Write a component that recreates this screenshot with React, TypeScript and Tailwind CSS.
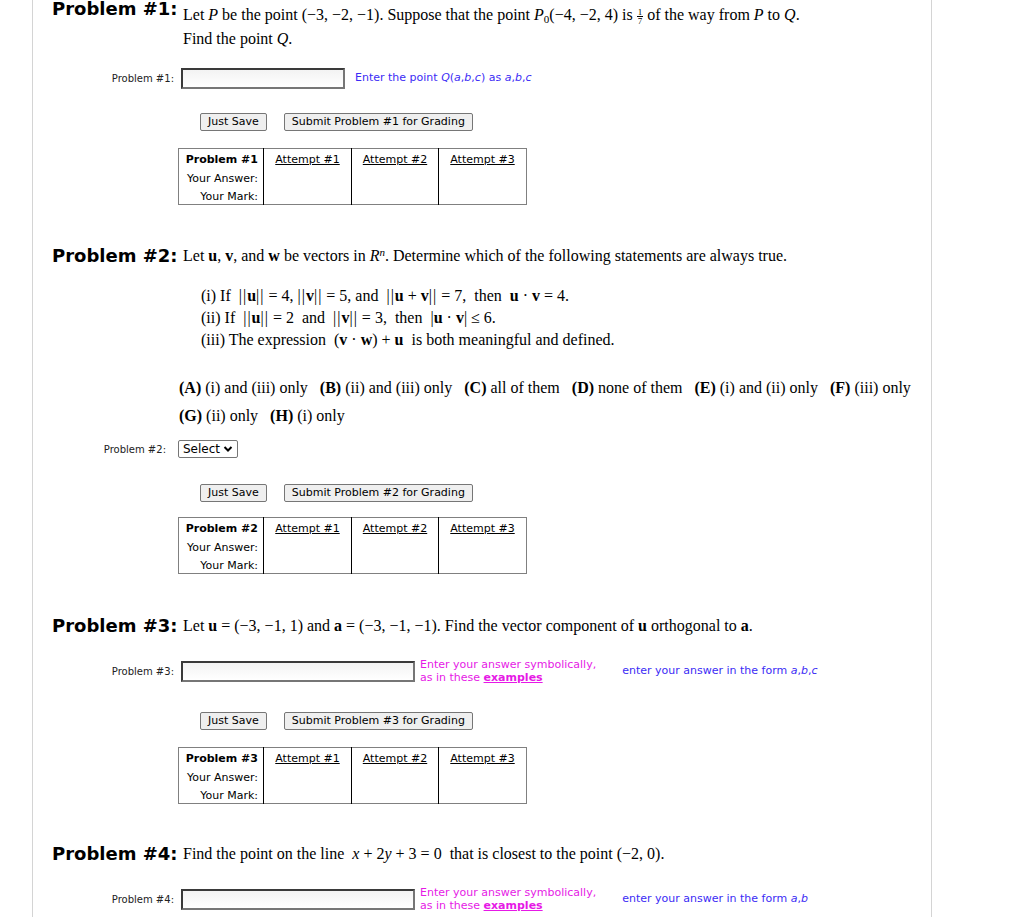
import React from 'react';

const sans = "font-['Verdana','DejaVu_Sans',sans-serif]";
const serif = "font-['Liberation_Serif','Times_New_Roman',serif]";

const Heading: React.FC<{ n: number }> = ({ n }) => (
  <div className={`w-[131px] shrink-0 text-[18px] font-bold leading-[24px] text-black ${sans}`}>Problem #{n}:</div>
);

const Frac: React.FC = () => (
  <span className="mx-[4px] inline-flex flex-col items-center align-middle text-[9px] leading-[8px]">
    <span className="border-b border-black px-[1px]">1</span>
    <span>7</span>
  </span>
);

// thin double norm bars
const Nm: React.FC<{ children: React.ReactNode }> = ({ children }) => (
  <span>
    <span className="tracking-[1px]">||</span>
    {children}
    <span className="tracking-[1px]">||</span>
  </span>
);

const Buttons: React.FC<{ n: number }> = ({ n }) => (
  <div className={`ml-[148px] flex gap-[17px] text-[11px] ${sans}`}>
    <button className="h-[18px] rounded-[2px] border border-[#767676] bg-[#efefef] px-[7px] leading-[16px] text-black">Just Save</button>
    <button className="h-[18px] rounded-[2px] border border-[#767676] bg-[#efefef] px-[7px] leading-[16px] text-black">
      Submit Problem #{n} for Grading
    </button>
  </div>
);

const Attempts: React.FC<{ n: number }> = ({ n }) => (
  <table className={`ml-[126px] border-collapse border border-[#808080] text-[11px] leading-[13px] text-black ${sans}`}>
    <tbody>
      <tr>
        <td className="w-[85px] border-r border-black pb-[2px] pr-[5px] pt-[4px] text-right font-bold">Problem #{n}</td>
        <td className="w-[88px] border-r border-black pb-[2px] pt-[4px] text-center underline">Attempt #1</td>
        <td className="w-[87px] border-r border-black pb-[2px] pt-[4px] text-center underline">Attempt #2</td>
        <td className="w-[88px] pb-[2px] pt-[4px] text-center underline">Attempt #3</td>
      </tr>
      <tr>
        <td className="border-r border-black pb-[1px] pr-[5px] pt-[4px] text-right">Your Answer:</td>
        <td className="border-r border-black"></td>
        <td className="border-r border-black"></td>
        <td></td>
      </tr>
      <tr>
        <td className="border-r border-black pb-[1px] pr-[5px] pt-[4px] text-right">Your Mark:</td>
        <td className="border-r border-black"></td>
        <td className="border-r border-black"></td>
        <td></td>
      </tr>
    </tbody>
  </table>
);

const Input: React.FC<{ w: string }> = ({ w }) => (
  <div className={`${w} h-[21px] border-2 border-t-[#3a3a3a] border-l-[#3a3a3a] border-r-[#767676] border-b-[#767676] bg-gradient-to-b from-[#f3f3f3] to-white`} />
);

const Label: React.FC<{ n: number; w?: string }> = ({ n, w = 'w-[122px]' }) => (
  <div className={`${w} shrink-0 text-right text-[10px] text-[#222] ${sans}`}>Problem #{n}:</div>
);

const Symbolic: React.FC = () => (
  <div className={`ml-[5px] text-[11px] leading-[13px] text-[#e619e6] ${sans}`}>
    <div>Enter your answer symbolically,</div>
    <div>
      as in these <span className="font-bold underline">examples</span>
    </div>
  </div>
);

const App: React.FC = () => {
  return (
    <div className="min-h-screen bg-white">
      <div className="ml-[32px] min-h-[917px] w-[900px] border-x border-[#d4d4d4] bg-white pl-[19px]">
        {/* Problem 1 */}
        <div className="flex pt-[3px]">
          <div className="-mt-[6px]"><Heading n={1} /></div>
          <div className={`text-[16px] leading-[24px] text-black ${serif}`}>
            <div>
              Let <i>P</i> be the point (−3, −2, −1). Suppose that the point <i>P</i>
              <sub className="text-[11px]">0</sub>(−4, −2, 4) is<Frac />of the way from <i>P</i> to <i>Q</i>.
            </div>
            <div>
              Find the point <i>Q</i>.
            </div>
          </div>
        </div>
        <div className="mt-[17px] flex h-[20px] items-center">
          <Label n={1} />
          <div className="ml-[7px]"><Input w="w-[164px] h-[20px]" /></div>
          <div className={`ml-[10px] text-[11px] text-[#3b2cf5] ${sans}`}>
            Enter the point <i>Q</i>(<i>a</i>,<i>b</i>,<i>c</i>) as <i>a</i>,<i>b</i>,<i>c</i>
          </div>
        </div>
        <div className="mt-[25px]"><Buttons n={1} /></div>
        <div className="mt-[17px]"><Attempts n={1} /></div>

        {/* Problem 2 */}
        <div className="mt-[39px] flex">
          <Heading n={2} />
          <div className={`text-[16px] leading-[24px] text-black ${serif}`}>
            Let <b>u</b>, <b>v</b>, and <b>w</b> be vectors in <i>R</i>
            <sup className="text-[11px]"><i>n</i></sup>. Determine which of the following statements are always true.
          </div>
        </div>
        <div className={`ml-[149px] mt-[17px] text-[16px] leading-[22px] text-black ${serif}`}>
          <div>
            (i) If &nbsp;<Nm><b>u</b></Nm> = 4, <Nm><b>v</b></Nm> = 5, and &nbsp;<Nm><b>u</b> + <b>v</b></Nm> = 7, &nbsp;then &nbsp;<b>u</b> · <b>v</b> = 4.
          </div>
          <div>
            (ii) If &nbsp;<Nm><b>u</b></Nm> = 2 &nbsp;and &nbsp;<Nm><b>v</b></Nm> = 3, &nbsp;then &nbsp;|<b>u</b> · <b>v</b>| ≤ 6.
          </div>
          <div>
            (iii) The expression &nbsp;(<b>v</b> · <b>w</b>) + <b>u</b> &nbsp;is both meaningful and defined.
          </div>
        </div>
        <div className={`ml-[127px] mt-[23px] text-[16px] leading-[28px] text-black ${serif}`}>
          <div className="flex gap-[12px] whitespace-nowrap">
            <span><b>(A)</b> (i) and (iii) only</span>
            <span><b>(B)</b> (ii) and (iii) only</span>
            <span><b>(C)</b> all of them</span>
            <span><b>(D)</b> none of them</span>
            <span><b>(E)</b> (i) and (ii) only</span>
            <span><b>(F)</b> (iii) only</span>
          </div>
          <div className="flex gap-[12px] whitespace-nowrap">
            <span><b>(G)</b> (ii) only</span>
            <span><b>(H)</b> (i) only</span>
          </div>
        </div>
        <div className="mt-[10px] flex h-[18px] items-center">
          <Label n={2} w="w-[114px]" />
          <div className={`ml-[12px] flex h-[18px] items-center gap-[3px] rounded-[2px] border border-[#767676] bg-white px-[4px] text-[12px] text-black ${sans}`}>
            Select
            <svg width="10" height="10" viewBox="0 0 10 10">
              <path d="M1.5 3 L5 6.5 L8.5 3" fill="none" stroke="black" strokeWidth="2" />
            </svg>
          </div>
        </div>
        <div className="mt-[26px]"><Buttons n={2} /></div>
        <div className="mt-[15px]"><Attempts n={2} /></div>

        {/* Problem 3 */}
        <div className="mt-[40px] flex">
          <Heading n={3} />
          <div className={`text-[16px] leading-[24px] text-black ${serif}`}>
            Let <b>u</b> = (−3, −1, 1) and <b>a</b> = (−3, −1, −1). Find the vector component of <b>u</b> orthogonal to <b>a</b>.
          </div>
        </div>
        <div className="mt-[19px] flex h-[28px] items-center">
          <Label n={3} />
          <div className="ml-[7px]"><Input w="w-[234px]" /></div>
          <Symbolic />
          <div className={`ml-[26px] text-[11px] text-[#3b2cf5] ${sans}`}>
            enter your answer in the form <i>a</i>,<i>b</i>,<i>c</i>
          </div>
        </div>
        <div className="mt-[27px]"><Buttons n={3} /></div>
        <div className="mt-[17px]"><Attempts n={3} /></div>

        {/* Problem 4 */}
        <div className="mt-[38px] flex">
          <Heading n={4} />
          <div className={`text-[16px] leading-[24px] text-black ${serif}`}>
            Find the point on the line &nbsp;<i>x</i> + 2<i>y</i> + 3 = 0 &nbsp;that is closest to the point (−2, 0).
          </div>
        </div>
        <div className="mt-[19px] flex h-[28px] items-center">
          <Label n={4} />
          <div className="ml-[7px]"><Input w="w-[234px]" /></div>
          <Symbolic />
          <div className={`ml-[26px] text-[11px] text-[#3b2cf5] ${sans}`}>
            enter your answer in the form <i>a</i>,<i>b</i>
          </div>
        </div>
      </div>
    </div>
  );
};

export default App;
